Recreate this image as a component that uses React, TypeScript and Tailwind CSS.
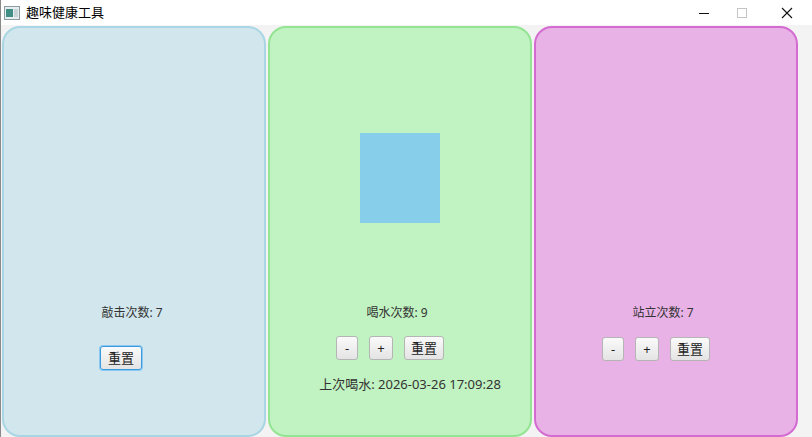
const font = "font-['Noto_Sans','Noto_Sans_CJK_SC',sans-serif]";

const Btn = ({ label, focused = false, w = "w-[22px]" }: { label: string; focused?: boolean; w?: string }) => (
  <button
    className={`h-[24px] ${w} rounded-[3px] border ${
      focused ? "border-[#3a9ae0] shadow-[0_0_0_1px_#8cc8f0]" : "border-[#b5b5b5]"
    } bg-gradient-to-b from-[#fafafa] to-[#e4e4e4] text-[13px] leading-none text-[#222] flex items-center justify-center`}
  >
    {label}
  </button>
);

export default function App() {
  return (
    <div className={`w-[812px] h-[437px] bg-[#f3f3f3] border-l border-[#8a8a8a] flex flex-col overflow-hidden ${font}`}>
      <div className="h-[25px] bg-white flex items-center shrink-0">
        <svg width="16" height="14" viewBox="0 0 16 14" className="ml-[3px]">
          <rect x="0.5" y="0.5" width="15" height="13" fill="#e8eef0" stroke="#8a9ca2" />
          <rect x="2" y="3" width="7" height="8" fill="#3f8f86" />
          <rect x="10" y="3" width="4" height="8" fill="#c8d4d8" />
        </svg>
        <span className="ml-[6px] text-[13px] text-black">趣味健康工具</span>
        <div className="ml-auto flex items-center h-full">
          <svg width="12" height="12" viewBox="0 0 12 12" className="mr-[26px]">
            <line x1="1" y1="6.5" x2="11" y2="6.5" stroke="#111" strokeWidth="1" />
          </svg>
          <svg width="12" height="12" viewBox="0 0 12 12" className="mr-[33px]">
            <rect x="1.5" y="1.5" width="9" height="9" fill="none" stroke="#c4c4c4" />
          </svg>
          <svg width="12" height="12" viewBox="0 0 12 12" className="mr-[19px]">
            <path d="M1 1 L11 11 M11 1 L1 11" stroke="#111" strokeWidth="1.1" />
          </svg>
        </div>
      </div>
      <div className="flex gap-[2px] pl-[1px] pr-[14px] pt-[1px] flex-1">
        <div className="w-[264px] h-[411px] rounded-[18px] border-2 border-[#a9d6e4] bg-[#d1e6ed] flex flex-col items-center pt-[278px]">
          <div className="-ml-[4px] text-[12px] leading-[14px] text-[#333]">敲击次数: 7</div>
          <div className="mt-[26px] -ml-[26px]">
            <Btn label="重置" focused w="w-[42px]" />
          </div>
        </div>
        <div className="w-[264px] h-[411px] rounded-[18px] border-2 border-[#93e493] bg-[#c1f2c1] flex flex-col items-center pt-[105px]">
          <div className="w-[80px] h-[90px] bg-[#87ceeb]" />
          <div className="mt-[83px] -ml-[6px] text-[12px] leading-[14px] text-[#333]">喝水次数: 9</div>
          <div className="mt-[16px] -ml-[20px] flex gap-[11px]">
            <Btn label="-" />
            <Btn label="+" w="w-[24px]" />
            <Btn label="重置" w="w-[40px]" />
          </div>
          <div className="mt-[17px] ml-[20px] text-[13px] leading-[14px] text-[#333]">上次喝水: 2026-03-26 17:09:28</div>
        </div>
        <div className="w-[264px] h-[411px] rounded-[18px] border-2 border-[#d46bd0] bg-[#e8b2e6] flex flex-col items-center pt-[278px]">
          <div className="-ml-[6px] text-[12px] leading-[14px] text-[#333]">站立次数: 7</div>
          <div className="mt-[17px] -ml-[20px] flex gap-[11px]">
            <Btn label="-" />
            <Btn label="+" w="w-[24px]" />
            <Btn label="重置" w="w-[40px]" />
          </div>
        </div>
      </div>
    </div>
  );
}
